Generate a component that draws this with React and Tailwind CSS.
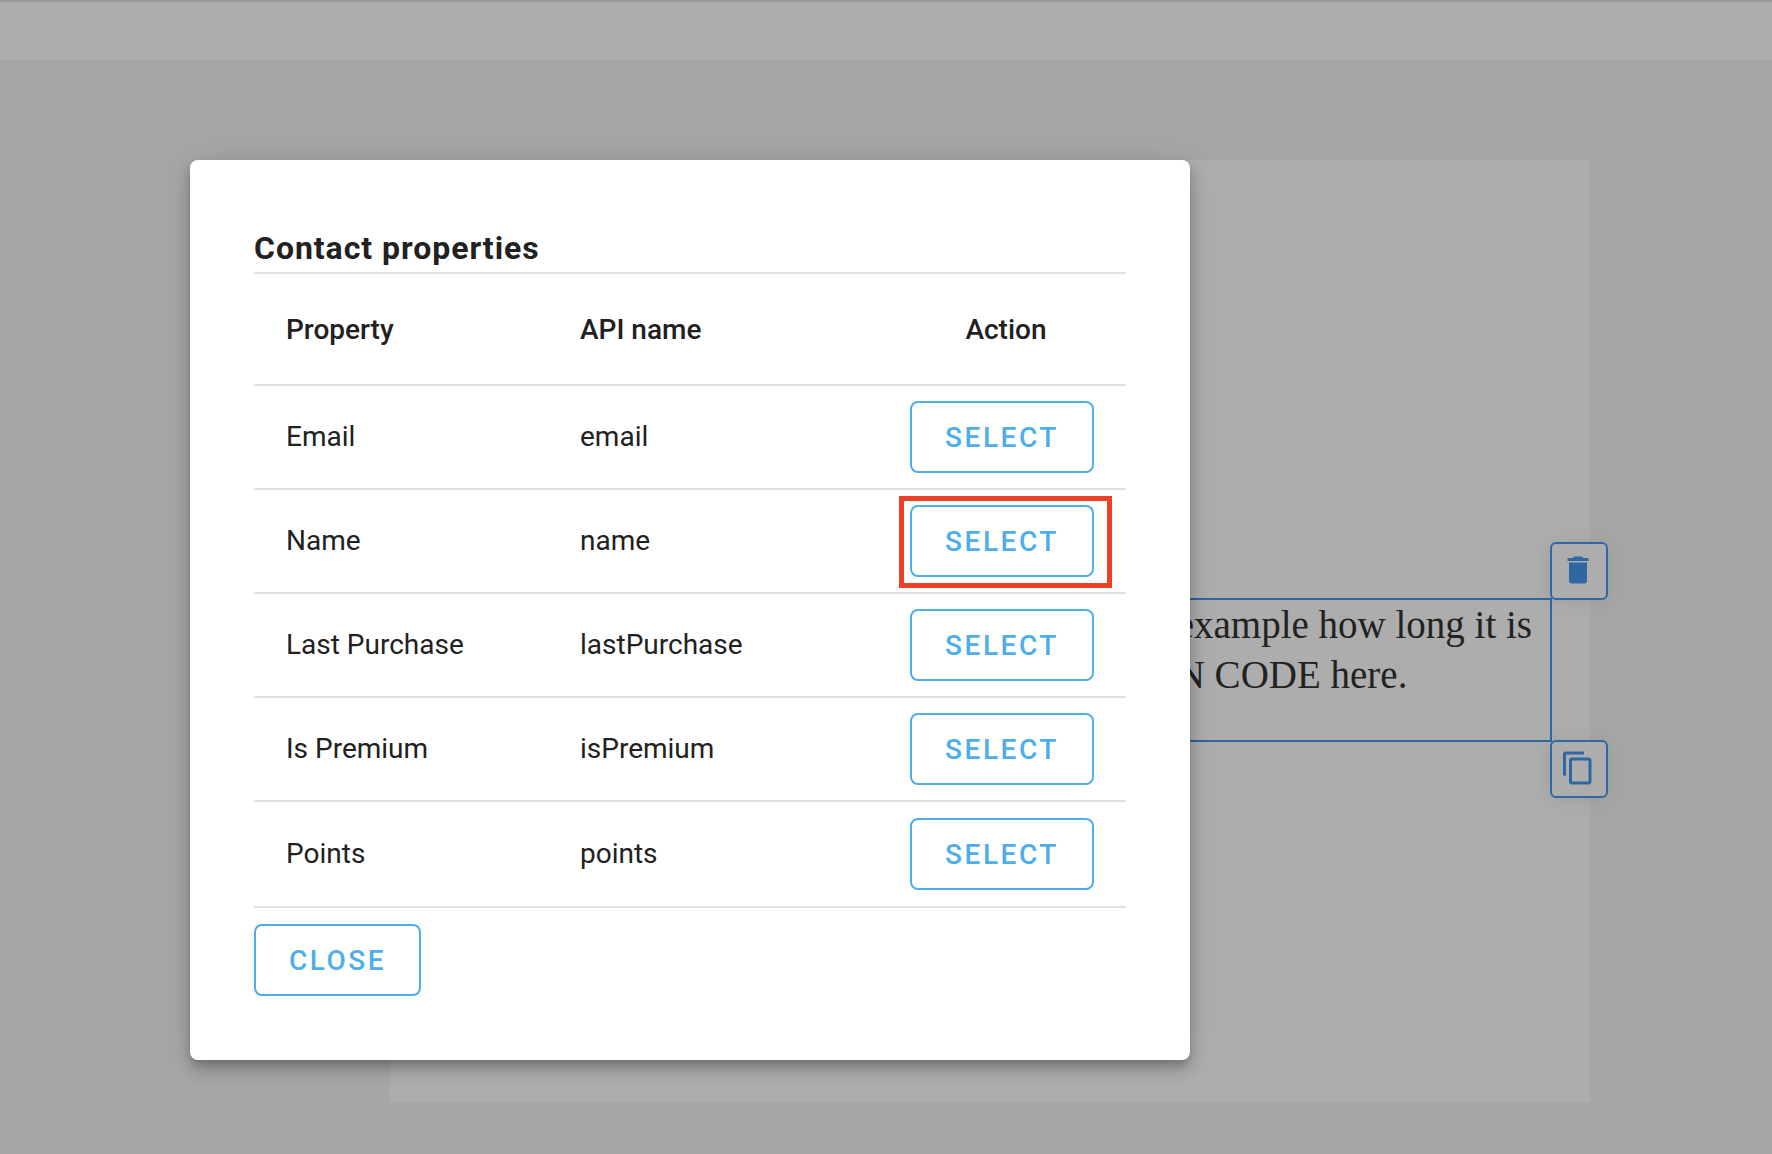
const properties = [
  { label: "Email", api: "email" },
  { label: "Name", api: "name", highlighted: true },
  { label: "Last Purchase", api: "lastPurchase" },
  { label: "Is Premium", api: "isPremium" },
  { label: "Points", api: "points" },
];

const DELETE_ICON =
  "M19,4H15.5L14.5,3H9.5L8.5,4H5V6H19M6,19A2,2 0 0,0 8,21H16A2,2 0 0,0 18,19V7H6V19Z";
const COPY_ICON =
  "M19,21H8V7H19M19,5H8A2,2 0 0,0 6,7V21A2,2 0 0,0 8,23H19A2,2 0 0,0 21,21V7A2,2 0 0,0 19,5M16,1H4A2,2 0 0,0 2,3V17H4V3H16V1Z";

function OutlinedButton({ children }) {
  return (
    <button
      type="button"
      className="h-[72px] rounded-lg border-2 border-[#4faee8] px-[33px] pt-[2px] text-[28px] leading-8 font-medium tracking-[0.09em] text-[#4faee8] uppercase"
    >
      {children}
    </button>
  );
}

function ToolButton({ label, path, className }) {
  return (
    <button
      type="button"
      aria-label={label}
      className={
        "absolute -right-[58px] flex size-[58px] items-start justify-center rounded-md border-2 border-[#2f67a3] bg-[#adadad] pt-2 pr-[2px] text-[#2f67a3] shadow-[0_2px_20px_rgba(0,0,0,0.08)] " +
        className
      }
    >
      <svg viewBox="0 0 24 24" className="size-9" fill="currentColor" aria-hidden="true">
        <path d={path} />
      </svg>
    </button>
  );
}

function PropertiesDialog() {
  return (
    <div
      role="dialog"
      aria-labelledby="dialog-title"
      className="absolute top-40 left-[190px] w-[calc(100%-380px)] max-w-[1000px] rounded-lg bg-white p-16 font-[Roboto,sans-serif] text-[#212121] shadow-[0_6px_10px_-2px_rgba(0,0,0,0.2),0_10px_16px_rgba(0,0,0,0.14),0_2px_28px_rgba(0,0,0,0.12)]"
    >
      <h2 id="dialog-title" className="text-[32px] leading-[48px] font-bold tracking-[0.03em]">
        Contact properties
      </h2>
      <div className="mb-4 border-y-2 border-[#e2e2e2]">
        <table className="w-full table-fixed border-separate border-spacing-0 text-left text-[28px] leading-8">
          <thead>
            <tr className="h-28 [&>th]:border-b-2 [&>th]:border-[#e0e0e0] [&>th]:pt-[2px] [&>th]:font-medium">
              <th className="w-[294px] px-8">Property</th>
              <th className="px-8">API name</th>
              <th className="w-[248px] pr-8 pl-10 text-center">Action</th>
            </tr>
          </thead>
          <tbody className="[&>tr:not(:last-child)>td]:border-b-2 [&>tr>td]:border-[#e0e0e0]">
            {properties.map((p) => (
              <tr key={p.api} className="h-[104px]">
                <td className="px-8">{p.label}</td>
                <td className="px-8">{p.api}</td>
                <td className="text-center">
                  <div className="relative inline-flex align-middle">
                    <OutlinedButton>Select</OutlinedButton>
                    {p.highlighted && (
                      <div className="pointer-events-none absolute -top-[9px] -right-[18px] -bottom-[11px] -left-[11px] border-5 border-[#ee4026]" />
                    )}
                  </div>
                </td>
              </tr>
            ))}
          </tbody>
        </table>
      </div>
      <div className="flex">
        <OutlinedButton>Close</OutlinedButton>
      </div>
    </div>
  );
}

export default function App() {
  return (
    <div className="relative min-h-screen bg-[#a6a6a6]">
      <header className="h-[60px] border-t-2 border-[#999999] bg-[#adadad]" />
      <main className="pt-[100px] pr-[182px] pb-[52px] pl-[390px]">
        <section className="bg-[#adadad] px-[38px] pt-[438px] pb-[360px]">
          <div className="relative h-36 border-2 border-[#2f67a3] pr-[18px] text-right">
            <p className="inline-block text-left font-['Liberation_Serif',serif] text-[39px] leading-[50px] whitespace-nowrap text-[#222222]">
              example how long it is
              <br />N CODE here.
            </p>
            <ToolButton label="Delete" path={DELETE_ICON} className="-top-[58px]" />
            <ToolButton label="Duplicate" path={COPY_ICON} className="-bottom-[58px]" />
          </div>
        </section>
      </main>
      <PropertiesDialog />
    </div>
  );
}
